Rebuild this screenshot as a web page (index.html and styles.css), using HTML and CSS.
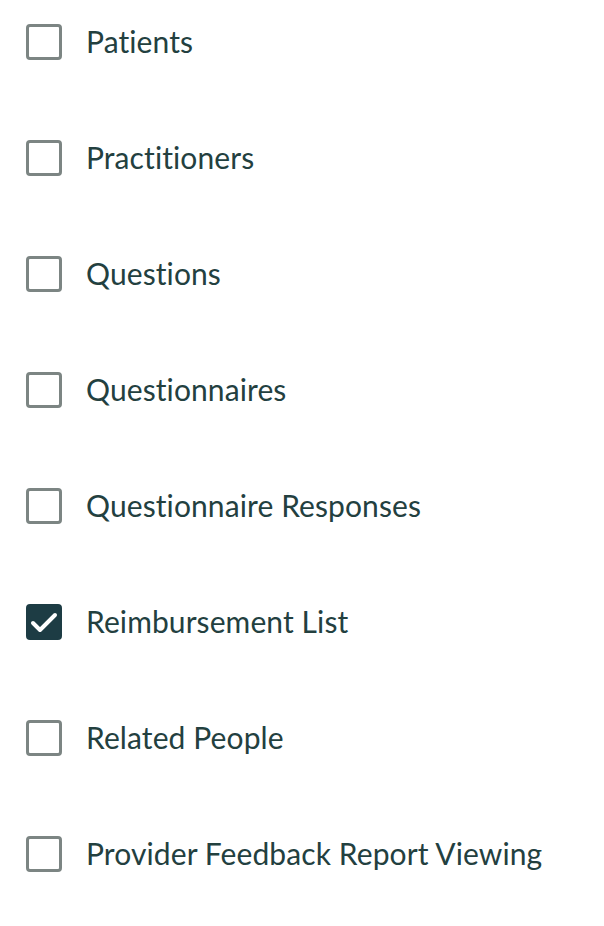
FILE: index.html
```html
<!DOCTYPE html>
<html>
<head>
<meta charset="utf-8">
<link rel="stylesheet" href="styles.css">
</head>
<body>
<ul class="list">
  <li class="item"><span class="box"></span><span class="label">Patients</span></li>
  <li class="item"><span class="box"></span><span class="label">Practitioners</span></li>
  <li class="item"><span class="box"></span><span class="label">Questions</span></li>
  <li class="item"><span class="box"></span><span class="label">Questionnaires</span></li>
  <li class="item"><span class="box"></span><span class="label">Questionnaire Responses</span></li>
  <li class="item"><span class="box checked"><svg viewBox="0 0 36 36" width="36" height="36"><path d="M7 19 L14 26 L29 11" fill="none" stroke="#fff" stroke-width="4" stroke-linecap="round" stroke-linejoin="round"/></svg></span><span class="label">Reimbursement List</span></li>
  <li class="item"><span class="box"></span><span class="label">Related People</span></li>
  <li class="item"><span class="box"></span><span class="label">Provider Feedback Report Viewing</span></li>
</ul>
</body>
</html>
```
FILE: styles.css
```css
html, body {
  margin: 0;
  padding: 0;
  background: #ffffff;
}
.list {
  list-style: none;
  margin: 0;
  padding: 24px 0 0 26px;
  display: flex;
  flex-direction: column;
  gap: 80px;
}
.item {
  display: flex;
  align-items: center;
  height: 36px;
  gap: 24px;
}
.box {
  box-sizing: border-box;
  width: 36px;
  height: 36px;
  border: 3.5px solid #7c8583;
  border-radius: 4px;
  flex: none;
  position: relative;
}
.box.checked {
  background: #1d3c44;
  border-color: #1d3c44;
}
.box svg {
  position: absolute;
  left: -3.5px;
  top: -3.5px;
}
.label {
  font-family: Lato, "Noto Sans", sans-serif;
  font-weight: 400;
  font-size: 30px;
  letter-spacing: 0.1px;
  font-variant-ligatures: none;
  color: #23403f;
  line-height: 36px;
  position: relative;
  top: -1px;
}
```
